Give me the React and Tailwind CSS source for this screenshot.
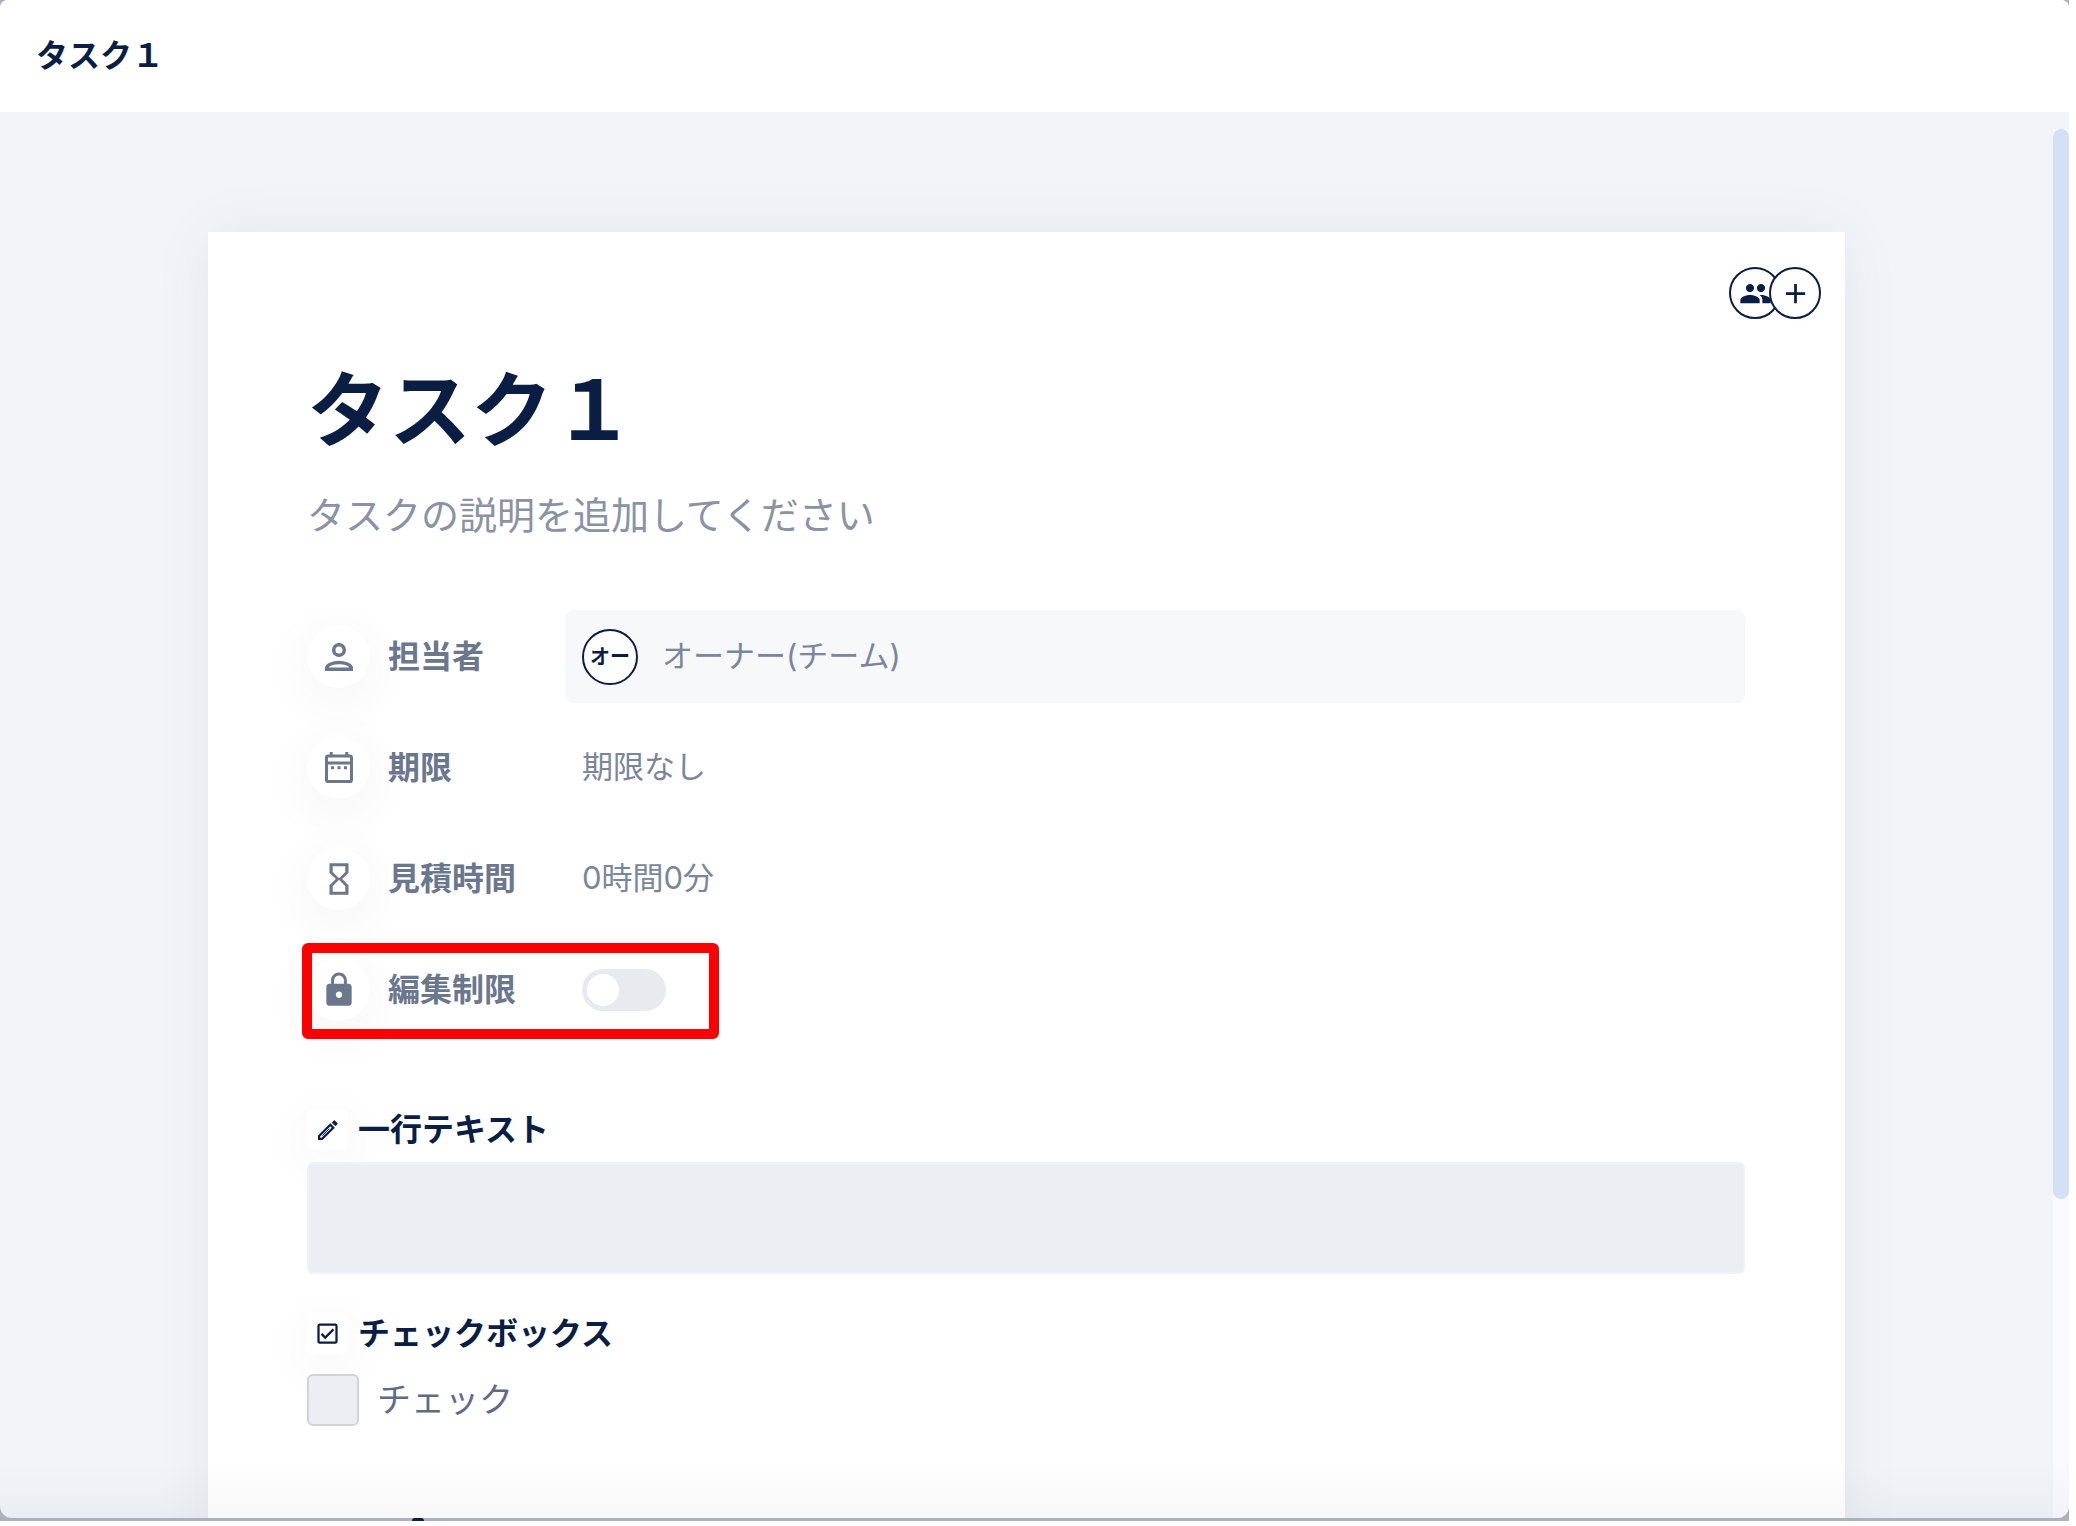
import { useState } from 'react'
import { MdAdd, MdPeople, MdHourglassEmpty, MdLock, MdOutlineCheckBox } from 'react-icons/md'

function PersonIcon() {
  return (
    <svg viewBox="0 0 28 28" className="size-7" fill="none" stroke="currentColor" strokeWidth="3.5">
      <circle cx="14" cy="7" r="5.3" />
      <path d="M1.7 26.3v-1.4c0-3.2 6.6-5.4 12.3-5.4s12.3 2.2 12.3 5.4v1.4z" />
    </svg>
  )
}

function CalendarIcon() {
  return (
    <svg viewBox="0 0 28 31" className="h-[31px] w-7" fill="none" stroke="currentColor" strokeWidth="3">
      <rect x="1.5" y="4" width="25" height="25.5" rx="1.6" />
      <path d="M1.5 11h25M6.2 0v4M21.8 0v4" />
      <path d="M6 15.8h3M12.5 15.8h3M19 15.8h3" />
    </svg>
  )
}

function PencilIcon() {
  return (
    <svg viewBox="0 0 20 20" className="size-5" fill="none" stroke="currentColor" strokeWidth="2.2">
      <path d="M1.1 18.9v-3L12.3 4.7l3 3L4.1 18.9z" />
      <path d="M14.2 2.6l1.6-1.6a.6.6 0 0 1 .9 0l2.3 2.3a.6.6 0 0 1 0 .9l-1.6 1.6z" fill="currentColor" strokeWidth="1" />
      <path d="M4.4 15.6l7-7" strokeWidth="1" />
    </svg>
  )
}

function FieldRow({ icon, label, htmlFor, children }) {
  return (
    <div className="flex h-[93px] items-center">
      <div className="flex size-[63px] shrink-0 items-center justify-center rounded-full bg-white text-[#6b778c] shadow-[0_12px_54px_rgba(9,30,66,0.06)]">
        {icon}
      </div>
      <label htmlFor={htmlFor} className="ml-[18px] w-[177px] shrink-0 text-[32px] font-bold text-[#6b778c]">
        {label}
      </label>
      {children}
    </div>
  )
}

function SectionTitle({ icon, id, children }) {
  return (
    <h2 id={id} className="flex h-[41px] items-center gap-[10px] text-[32px] font-bold">
      <span className="flex size-[41px] items-center justify-center rounded-md bg-white shadow-[0_12px_54px_rgba(9,30,66,0.06)]">
        {icon}
      </span>
      {children}
    </h2>
  )
}

export default function App() {
  const [locked, setLocked]   = useState(false)
  const [checked, setChecked] = useState(false)
  const [text, setText]       = useState('')

  return (
    <div className="h-screen overflow-hidden bg-white pr-[7px] pb-[5px] font-['Inter','Noto_Sans_CJK_JP',sans-serif] text-[#091e42]">
      <div className="relative h-full bg-[#adb1be] pb-[3px]">
        <div className="relative flex h-full flex-col overflow-hidden rounded-t-lg rounded-b-xl bg-[#f1f5fa]">
          {/* Header */}
          <header className="flex h-28 shrink-0 items-center bg-white px-9">
            <span className="text-[32px] font-bold">タスク１</span>
          </header>

          {/* Body */}
          <div className="flex min-h-0 flex-1">
            <main className="min-w-0 flex-1 overflow-hidden">
              <article className="mx-52 mt-[120px] h-full bg-white pr-[100px] pl-[99px] shadow-[0_0_60px_rgba(0,0,0,0.06)]">
                <div className="-mr-[76px] flex justify-end pt-[35px]">
                  <button aria-label="メンバー" className="flex size-[52px] items-center justify-center rounded-full border-2 border-[#091e42] bg-white">
                    <MdPeople className="size-[33px] shrink-0" />
                  </button>
                  <button aria-label="追加" className="z-10 -ml-3 flex size-[52px] items-center justify-center rounded-full border-2 border-[#091e42] bg-white">
                    <MdAdd className="size-[33px] shrink-0" />
                  </button>
                </div>

                <h1 className="mt-8 text-[82px] leading-[120px] font-bold">タスク１</h1>
                <input
                  aria-label="説明"
                  placeholder="タスクの説明を追加してください"
                  className="mt-4 block h-14 w-full text-[38px] outline-none placeholder:text-[#8993a4]"
                />

                {/* Fields */}
                <div className="mt-[67px] flex flex-col gap-[18px]">
                  <FieldRow icon={<PersonIcon />} label="担当者" htmlFor="assignee">
                    <button id="assignee" className="flex h-full flex-1 items-center gap-6 rounded-lg bg-[#f7f8fa] px-[17px] text-[31px] text-[#7a869a]">
                      <span className="flex size-14 items-center justify-center rounded-full border-2 border-[#091e42] bg-white text-[20px] font-bold text-[#091e42]">
                        オー
                      </span>
                      オーナー(チーム)
                    </button>
                  </FieldRow>
                  <FieldRow icon={<CalendarIcon />} label="期限" htmlFor="due">
                    <button id="due" className="px-[17px] text-[31px] text-[#7a869a]">期限なし</button>
                  </FieldRow>
                  <FieldRow icon={<MdHourglassEmpty className="size-[38px]" />} label="見積時間" htmlFor="estimate">
                    <button id="estimate" className="px-[17px] text-[31px] text-[#7a869a]">0時間0分</button>
                  </FieldRow>
                  <div className="relative">
                    <FieldRow icon={<MdLock className="size-[38px]" />} label="編集制限" htmlFor="lock">
                      <input
                        id="lock"
                        type="checkbox"
                        role="switch"
                        checked={locked}
                        onChange={e => setLocked(e.target.checked)}
                        className="ml-[17px] h-[42px] w-[84px] appearance-none rounded-full bg-[#e9eaf0] p-[5px] before:block before:size-8 before:rounded-full before:bg-white checked:bg-[#091e42] checked:before:ml-auto"
                      />
                    </FieldRow>
                    {/* Highlight */}
                    <div className="pointer-events-none absolute top-0 -left-[5px] h-24 w-[417px] rounded-md border-[10px] border-[#ff0000]" />
                  </div>
                </div>

                {/* Custom fields */}
                <div className="mt-[73px]">
                  <SectionTitle icon={<PencilIcon />} id="line-text">一行テキスト</SectionTitle>
                  <input
                    aria-labelledby="line-text"
                    value={text}
                    onChange={e => setText(e.target.value)}
                    className="relative mt-3 block h-28 w-full rounded-md border-2 border-[#f0f1f9] bg-[#edeef4] px-4 text-[31px]"
                  />
                </div>
                <div className="mt-[39px]">
                  <SectionTitle icon={<MdOutlineCheckBox className="size-[27px]" />} id="check-box">チェックボックス</SectionTitle>
                  <label className="mt-5 flex items-center gap-[18px] text-[34px] leading-[52px] text-[#5e6c84]">
                    <input
                      type="checkbox"
                      checked={checked}
                      onChange={e => setChecked(e.target.checked)}
                      className="relative size-[52px] appearance-none rounded-md border-2 border-[#d2d2d7] bg-[#edeef4] checked:bg-[#6b778c]"
                    />
                    チェック
                  </label>
                </div>
              </article>
            </main>

            {/* Scrollbar */}
            <div className="w-4 shrink-0 pt-[17px]">
              <div className="h-full bg-[#f9faff]">
                <div className="h-[77%] rounded-full bg-[#d5e0f7]" />
              </div>
            </div>
          </div>

          <div className="pointer-events-none absolute inset-x-0 bottom-0 h-14 bg-linear-to-b from-transparent to-black/3" />
        </div>
        {/* Next section peeking out under the window edge */}
        <div className="absolute bottom-0 left-[412px] h-[3px] w-3 rounded-t-full bg-[#091e42]" />
      </div>
    </div>
  )
}
